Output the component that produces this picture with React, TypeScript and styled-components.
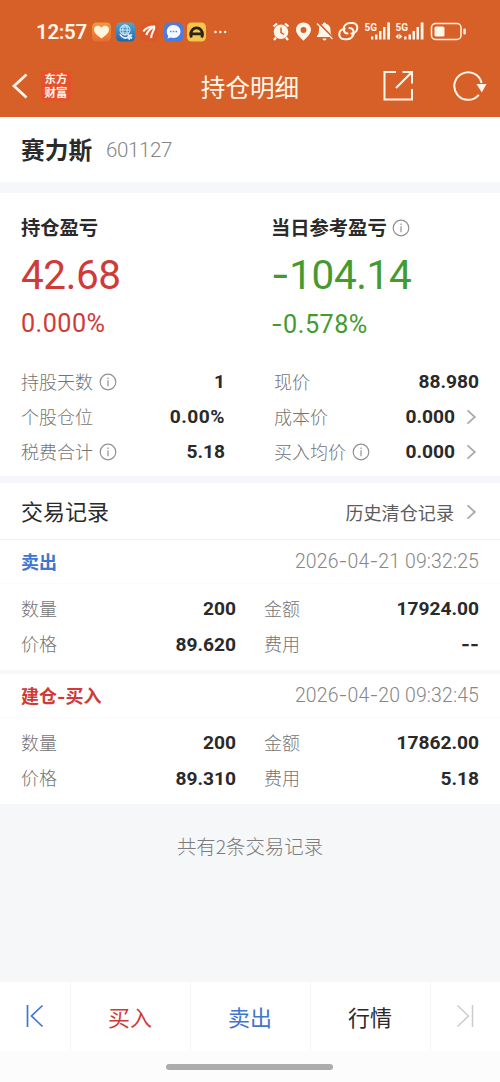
import React from "react";
import styled, { createGlobalStyle } from "styled-components";

const GlobalStyle = createGlobalStyle`
  * { box-sizing: border-box; }
  body {
    margin: 0;
    background: #f6f7f9;
    font-family: "Noto Sans CJK SC", sans-serif;
    color: #2a2a2a;
  }
`;

const ORANGE = "#d66028";
const RED = "#d03a37";
const GREEN = "#439b30";
const BLUE = "#4275cd";
const GREY = "#868686";

const Page = styled.div`
  display: flex;
  flex-direction: column;
  width: 500px;
  height: 1082px;
  overflow: hidden;
  white-space: nowrap;
`;

const Top = styled.header`
  height: 117px;
  background: ${ORANGE};
  color: #fff6ea;
`;

const StatusBar = styled.div`
  display: flex;
  align-items: center;
  justify-content: space-between;
  height: 55px;
  padding: 9px 33px 0 36px;
`;

const Clock = styled.span`
  width: 52px;
  margin-right: 4px;
  font: 600 20.5px/24px Roboto, sans-serif;
  letter-spacing: -0.3px;
`;

const StatusGroup = styled.div`
  display: flex;
  align-items: center;
`;

const AppIcons = styled.svg`
  display: block;
  width: 140px;
  height: 22px;
`;

const SystemIcons = styled.svg`
  display: block;
  width: 196px;
  height: 22px;
`;

const TitleBar = styled.div`
  display: grid;
  grid-template-columns: 150px 1fr 150px;
  align-items: center;
  height: 61px;
`;

const TitleLeft = styled.div`
  display: flex;
  align-items: center;
  padding-left: 11px;
`;

const Brand = styled.div`
  display: flex;
  flex-direction: column;
  width: 30px;
  height: 30px;
  margin-left: 12px;
  padding-top: 1px;
  border-radius: 4px;
  background: #e5512b;
  text-align: center;
  font-family: "Liberation Serif", "Noto Sans CJK SC", serif;
  font-weight: 700;
  font-size: 11.4px;
  line-height: 14px;
`;

const Title = styled.h1`
  margin: 0;
  text-align: center;
  font-weight: 400;
  font-size: 24.6px;
  line-height: 36px;
`;

const TitleRight = styled.div`
  display: flex;
  align-items: center;
  justify-content: flex-end;
  gap: 38px;
  padding-right: 13px;
`;

const NameRow = styled.section`
  display: flex;
  align-items: center;
  gap: 14px;
  height: 65px;
  padding: 1px 21px 0;
  background: #fff;
`;

const StockName = styled.h2`
  margin: 0;
  padding-bottom: 2px;
  font-size: 23.7px;
  font-weight: 700;
`;

const Gap = styled.div<{ $h: number }>`
  height: ${(p) => p.$h}px;
  background: #f5f7fa;
`;

const NumText = styled.span<{ $size: number; $weight?: number; $color?: string; $ls?: number }>`
  font-family: Roboto, sans-serif;
  font-size: ${(p) => p.$size}px;
  font-weight: ${(p) => p.$weight ?? 400};
  color: ${(p) => p.$color ?? "#2a2a2a"};
  letter-spacing: ${(p) => p.$ls ?? 0}px;
  line-height: 1.2;
`;

const Dash = styled.span`
  font-family: Inter, sans-serif;
`;

type NumProps = { value: string; size: number; weight?: number; color?: string; ls?: number };

function Num({ value, size, weight, color, ls }: NumProps) {
  return (
    <NumText $size={size} $weight={weight} $color={color} $ls={ls}>
      {value.split(/(-)/).map((part, i) => (part === "-" ? <Dash key={i}>-</Dash> : part))}
    </NumText>
  );
}

const Summary = styled.section`
  height: 283px;
  padding: 20px 21px 0;
  background: #fff;
`;

const ProfitGrid = styled.div`
  display: grid;
  grid-template-columns: 250px 1fr;
`;

const Profit = styled.div`
  display: flex;
  flex-direction: column;
`;

const ProfitLabel = styled.div`
  display: flex;
  align-items: center;
  gap: 5px;
  height: 29px;
  font-size: 19.3px;
  font-weight: 700;
`;

const ProfitLabelText = styled.span`
  padding-bottom: 2px;
`;

const BigLine = styled.div`
  display: flex;
  align-items: center;
  height: 66px;
`;

const PercentLine = styled.div`
  display: flex;
  align-items: center;
  height: 33px;
`;

const StatGrid = styled.div`
  display: grid;
  grid-template-columns: 204px 205px;
  column-gap: 49px;
  padding-top: 23px;
`;

const Row = styled.div<{ $h: number }>`
  display: flex;
  align-items: center;
  justify-content: space-between;
  height: ${(p) => p.$h}px;
`;

const Label = styled.span`
  display: flex;
  align-items: center;
  gap: 6px;
  font-size: 18px;
  font-weight: 300;
  color: #747474;
`;

const LabelText = styled.span`
  padding-bottom: 2px;
  line-height: 26px;
`;

const Value = styled.span`
  display: flex;
  align-items: center;
  gap: 11px;
`;

const RecordsHead = styled.div`
  display: flex;
  align-items: center;
  justify-content: space-between;
  height: 57px;
  padding: 0 21px 2px;
  border-bottom: 1px solid #f1f2f4;
  background: #fff;
  font-size: 22px;
`;

const History = styled.span`
  display: flex;
  align-items: center;
  gap: 12px;
  padding-top: 3px;
  font-size: 18.1px;
  color: #5c5c5c;
`;

const Record = styled.section<{ $h: number }>`
  height: ${(p) => p.$h}px;
  background: #fff;
`;

const RecordHead = styled.div`
  display: flex;
  align-items: center;
  justify-content: space-between;
  height: 44px;
  padding: 0 21px;
  border-bottom: 1px solid #fbfbfb;
`;

const Side = styled.span<{ $color: string }>`
  padding-bottom: 2px;
  font-size: 18px;
  font-weight: 700;
  color: ${(p) => p.$color};
`;

const RecordGrid = styled.div`
  display: grid;
  grid-template-columns: 215px 215px;
  column-gap: 28px;
  padding: 7px 21px 0;
`;

const Footnote = styled.p`
  flex: 1;
  margin: 0;
  padding-top: 28px;
  text-align: center;
  background: #f6f7f9;
  font-size: 19.4px;
  font-weight: 300;
  line-height: 28px;
  color: #7c7c7c;
`;

const Nav = styled.nav`
  display: grid;
  grid-template-columns: 70px 120px 120px 120px 70px;
  height: 69px;
  background: #fff;
`;

const NavItem = styled.div<{ $color: string }>`
  display: flex;
  align-items: center;
  justify-content: center;
  padding: 0 1px 2px 0;
  font-size: 22px;
  color: ${(p) => p.$color};
  & + & { border-left: 1px solid #f7f7f8; }
  svg { margin-top: 1px; }
`;

const HomeArea = styled.div`
  display: flex;
  justify-content: center;
  height: 31px;
  padding: 13px 1px 0 0;
  background: #fcfcfc;
`;

const HomeHandle = styled.div`
  width: 167px;
  height: 6px;
  border-radius: 3px;
  background: #acacac;
`;

const Info = () => (
  <svg width="18" height="18" viewBox="0 0 18 18" fill="none" stroke="#929292" strokeWidth="1.2">
    <circle cx="9" cy="9" r="7.8" />
    <path d="M9 7.3v6M9 4.5v1.4" />
  </svg>
);

const Chevron = () => (
  <svg width="13" height="18" viewBox="0 0 13 18" fill="none" stroke="#aaa" strokeWidth="1.8">
    <path d="M1.500 2.300 8.800 9l-7.300 6.700" />
  </svg>
);

const Signal = ({ x, arrows }: { x: number; arrows?: boolean }) => (
  <g transform={`translate(${x} 0)`}>
    <text x="0" y="9.5" fontSize="11.500" fontWeight="700" fontFamily="Roboto, sans-serif" textLength="12.500" lengthAdjust="spacingAndGlyphs">5G</text>
    {arrows ? <path d="M0 15.500 3 12.800v5.400zM6.800 15.500 3.800 12.800v5.400z" /> : <path d="M6.500 15.500h2.300v3H6.500z" />}
    <path d="M10.500 13.500h2.500v5h-2.500zM14.500 10h2.500v8.500h-2.500zM18.500 6h2.500v12.500h-2.500zM22.700 1.500h2.800v17h-2.800z" transform={arrows ? "translate(2.500 0)" : undefined} />
    {arrows && <path d="M8.700 15.500h2.300v3H8.700z" />}
  </g>
);

const stats = {
  left: [
    { label: "持股天数", info: true, value: "1" },
    { label: "个股仓位", value: "0.00%" },
    { label: "税费合计", info: true, value: "5.18" },
  ],
  right: [
    { label: "现价", value: "88.980" },
    { label: "成本价", value: "0.000", link: true },
    { label: "买入均价", info: true, value: "0.000", link: true },
  ],
};

type Stat = { label: string; value: string; info?: boolean; link?: boolean };

function StatColumn({ items, height = 35 }: { items: Stat[]; height?: number }) {
  return (
    <div>
      {items.map((s) => (
        <Row key={s.label} $h={height}>
          <Label><LabelText>{s.label}</LabelText>{s.info && <Info />}</Label>
          <Value>
            <Num value={s.value} size={19.2} weight={700} ls={s.value.endsWith("%") ? 0.5 : 0} />
            {s.link && <Chevron />}
          </Value>
        </Row>
      ))}
    </div>
  );
}

type TradeProps = { side: string; color: string; time: string; price: string; amount: string; fee: string };

function Trade({ side, color, time, price, amount, fee }: TradeProps) {
  return (
    <Record $h={130}>
      <RecordHead>
        <Side $color={color}>
          {side.split(/(-)/).map((part, i) => (part === "-" ? <Dash key={i}>-</Dash> : part))}
        </Side>
        <Num value={time} size={19.4} color={GREY} weight={300} ls={0.16} />
      </RecordHead>
      <RecordGrid>
        <StatColumn height={35.5} items={[{ label: "数量", value: "200" }, { label: "价格", value: price }]} />
        <StatColumn height={35.5} items={[{ label: "金额", value: amount }, { label: "费用", value: fee }]} />
      </RecordGrid>
    </Record>
  );
}

export default function App() {
  return (
    <>
      <GlobalStyle />
      <Page>
        <Top>
          <StatusBar>
            <StatusGroup>
              <Clock>12:57</Clock>
              <AppIcons viewBox="0 0 140 22">
                <defs>
                  <linearGradient id="globe" x2="0" y2="1"><stop stopColor="#54a5d2" /><stop offset="1" stopColor="#2463aa" /></linearGradient>
                  <linearGradient id="heart" x2="0" y2="1"><stop stopColor="#f39a3f" /><stop offset="1" stopColor="#ea6b2c" /></linearGradient>
                </defs>
                <rect x="0" y="1.500" width="19" height="19" rx="4.500" fill="url(#heart)" />
                <path d="M9.500 17.500C4.500 14 2 11.500 2 8.500c0-4 5.200-5 7.500-1.800 2.300-3.200 7.500-2.200 7.500 1.800 0 3-2.500 5.500-7.500 9z" fill="#fff4dc" />
                <rect x="24" y="1.500" width="19" height="19" rx="4.500" fill="url(#globe)" />
                <g fill="none" stroke="#d5eef7" strokeWidth="1">
                  <circle cx="33" cy="9" r="5" /><ellipse cx="33" cy="9" rx="2.200" ry="5" /><path d="M28 9h10M29 6h8M29 12h8" />
                  <path d="M28 13c2 4.500 6 5 9 2.500l3-2m-4 0 4 4m-4-1 2 2" strokeWidth="1.800" />
                </g>
                <rect x="48" y="1.500" width="19" height="19" rx="4.500" fill="#db5929" />
                <g fill="none" stroke="#fff6eb" strokeWidth="2.100">
                  <path d="M51.300 10.500c2.300-3.500 6-5 11.500-5" />
                  <path d="M54.300 14c1.700-4.300 4.500-7 8.500-8.500" />
                  <path d="M59.500 17c-1.500-3.500 2.500-5.500 3-11.500" />
                </g>
                <rect x="72" y="1.500" width="19" height="19" rx="4.500" fill="#4c7be0" />
                <path d="M81.500 4c4.300 0 7 3 7 6.500s-2.700 6.400-7 6.400c-1 0-2-.2-2.800-.5l-3.200 1.200.8-2.500c-3.600-4.800-.6-11.100 5.200-11.100z" fill="#f6faff" />
                <path d="M78 10.500h1.500m1.300 0h1.500m1.300 0h1.500" stroke="#5583df" strokeWidth="1.500" />
                <rect x="95" y="1.500" width="19" height="19" rx="4.500" fill="#f6c34b" />
                <path d="M99.500 16.500c-1.500-3-1-5 .5-7.200 2.200-3.300 7-3.300 9.200 0 1.500 2.200 2 4.200.5 7.200m-9.700-3.700h9" fill="none" stroke="#27221c" strokeWidth="2.700" />
                <g fill="#fff2dd"><circle cx="123.500" cy="11" r="1.300" /><circle cx="128.300" cy="11" r="1.300" /><circle cx="133.100" cy="11" r="1.300" /></g>
              </AppIcons>
            </StatusGroup>
            <SystemIcons viewBox="0 0 196 22" fill="#fff6ea">
              <g transform="translate(1.500 1)">
                <circle cx="8.500" cy="9.800" r="7.300" />
                <path d="M1 4.500 4.500 1.500M12.500 1.500 16 4.500M3.500 15.500 1.500 18M13.500 15.500l2 2.500" stroke="#fff6ea" strokeWidth="2.200" />
                <path d="M8.500 5.500v5l3 2" fill="none" stroke={ORANGE} strokeWidth="1.500" />
              </g>
              <path transform="translate(1 0)" fillRule="evenodd" d="M31.500 1.500c4.200 0 7.500 3.200 7.500 7.200 0 3.500-3.500 7.300-7.500 11-4-3.700-7.500-7.500-7.500-11 0-4 3.300-7.200 7.500-7.200zm0 4.500a3 3 0 1 0 0 6 3 3 0 0 0 0-6z" />
              <g transform="translate(1.500 0)">
                <path d="M52 1.500c.8 0 1.500.6 1.500 1.400 3.500.8 4.500 3 4.500 5.600 0 4 .6 5 2 6.500V16H44.500v-1c1.300-1.500 2-2.500 2-6.500 0-2.600 1-4.800 4-5.600 0-.8.7-1.400 1.500-1.400zM50 17.500h4c0 2.500-4 2.500-4 0z" />
                <path d="m46 2 15 15.500" stroke={ORANGE} strokeWidth="2" />
                <path d="m44.500 2.500 15.500 15.500" stroke="#fff6ea" strokeWidth="1.300" />
              </g>
              <g transform="translate(1 0)" fill="none" stroke="#fff6ea" strokeWidth="2.100" strokeLinecap="round">
                <path d="M75.500 12.500c-4 0-5.500-6.500-1-9.500 1-.7 2-1 4-1h1.800c7.500 0 6 10.500-.8 10.500" />
                <path d="M77.500 7c4 0 6 5.500 2 9.500-1 1-2.500 1.700-4 1.700h-3c-7.500 0-6.500-10 .2-10.500" />
              </g>
              <Signal x={93.500} />
              <Signal x={124.500} arrows />
              <rect x="160.500" y="2.500" width="29.500" height="16" rx="4" fill="none" stroke="#fff6ea" strokeWidth="1.500" />
              <rect x="163.500" y="5.500" width="10" height="10" rx="1.500" />
              <rect x="192.300" y="7.500" width="2.500" height="6" rx="1.200" />
            </SystemIcons>
          </StatusBar>
          <TitleBar>
            <TitleLeft>
              <svg width="18" height="26" viewBox="0 0 18 26" fill="none" stroke="#fff6ea" strokeWidth="2.700">
                <path d="M15.500 1.500 3 13l12.500 11.500" />
              </svg>
              <Brand><span>东方</span><span>财富</span></Brand>
            </TitleLeft>
            <Title>持仓明细</Title>
            <TitleRight>
              <svg width="32" height="32" viewBox="0 0 32 32" fill="none" stroke="#fff6ea" strokeWidth="2">
                <path d="M14 2H2.500v27.500H30V19M20.500 2H30v11.500M30 2 14 18" />
              </svg>
              <svg width="35" height="32" viewBox="0 0 35 32">
                <path d="M26.800 24.800A13.800 13.800 0 1 1 29.600 13" fill="none" stroke="#fff6ea" strokeWidth="2" />
                <path d="M24.500 14h10L29.800 22.500z" fill="#fff6ea" />
              </svg>
            </TitleRight>
          </TitleBar>
        </Top>

        <NameRow>
          <StockName>赛力斯</StockName>
          <Num value="601127" size={20.5} color={GREY} ls={-0.4} weight={300} />
        </NameRow>
        <Gap $h={11} />

        <Summary>
          <ProfitGrid>
            <Profit>
              <ProfitLabel><ProfitLabelText>持仓盈亏</ProfitLabelText></ProfitLabel>
              <BigLine><Num value="42.68" size={40.5} color={RED} ls={-0.4} /></BigLine>
              <PercentLine><Num value="0.000%" size={25.2} color={RED} ls={0.45} /></PercentLine>
            </Profit>
            <Profit>
              <ProfitLabel><ProfitLabelText>当日参考盈亏</ProfitLabelText><Info /></ProfitLabel>
              <BigLine><Num value="-104.14" size={40.5} color={GREEN} ls={-0.4} /></BigLine>
              <PercentLine><Num value="-0.578%" size={25.2} color={GREEN} ls={0.5} /></PercentLine>
            </Profit>
          </ProfitGrid>
          <StatGrid>
            <StatColumn items={stats.left} />
            <StatColumn items={stats.right} />
          </StatGrid>
        </Summary>
        <Gap $h={7} />

        <RecordsHead>
          <span>交易记录</span>
          <History>历史清仓记录<Chevron /></History>
        </RecordsHead>
        <Trade side="卖出" color={BLUE} time="2026-04-21 09:32:25" price="89.620" amount="17924.00" fee="--" />
        <Gap $h={4} />
        <Trade side="建仓-买入" color={RED} time="2026-04-20 09:32:45" price="89.310" amount="17862.00" fee="5.18" />
        <Footnote>共有2条交易记录</Footnote>

        <Nav>
          <NavItem $color={BLUE}>
            <svg width="20" height="24" viewBox="0 0 20 24" fill="none" stroke={BLUE} strokeWidth="1.700">
              <path d="M2.500 1v22M17.500 1.500 6.500 12l11 10.500" />
            </svg>
          </NavItem>
          <NavItem $color={RED}>买入</NavItem>
          <NavItem $color={BLUE}>卖出</NavItem>
          <NavItem $color="#2a2a2a">行情</NavItem>
          <NavItem $color="#ccc">
            <svg width="20" height="24" viewBox="0 0 20 24" fill="none" stroke="#ccc" strokeWidth="1.500">
              <path d="M17.500 1v22M2.500 1.500 13.500 12l-11 10.500" />
            </svg>
          </NavItem>
        </Nav>
        <HomeArea><HomeHandle /></HomeArea>
      </Page>
    </>
  );
}
